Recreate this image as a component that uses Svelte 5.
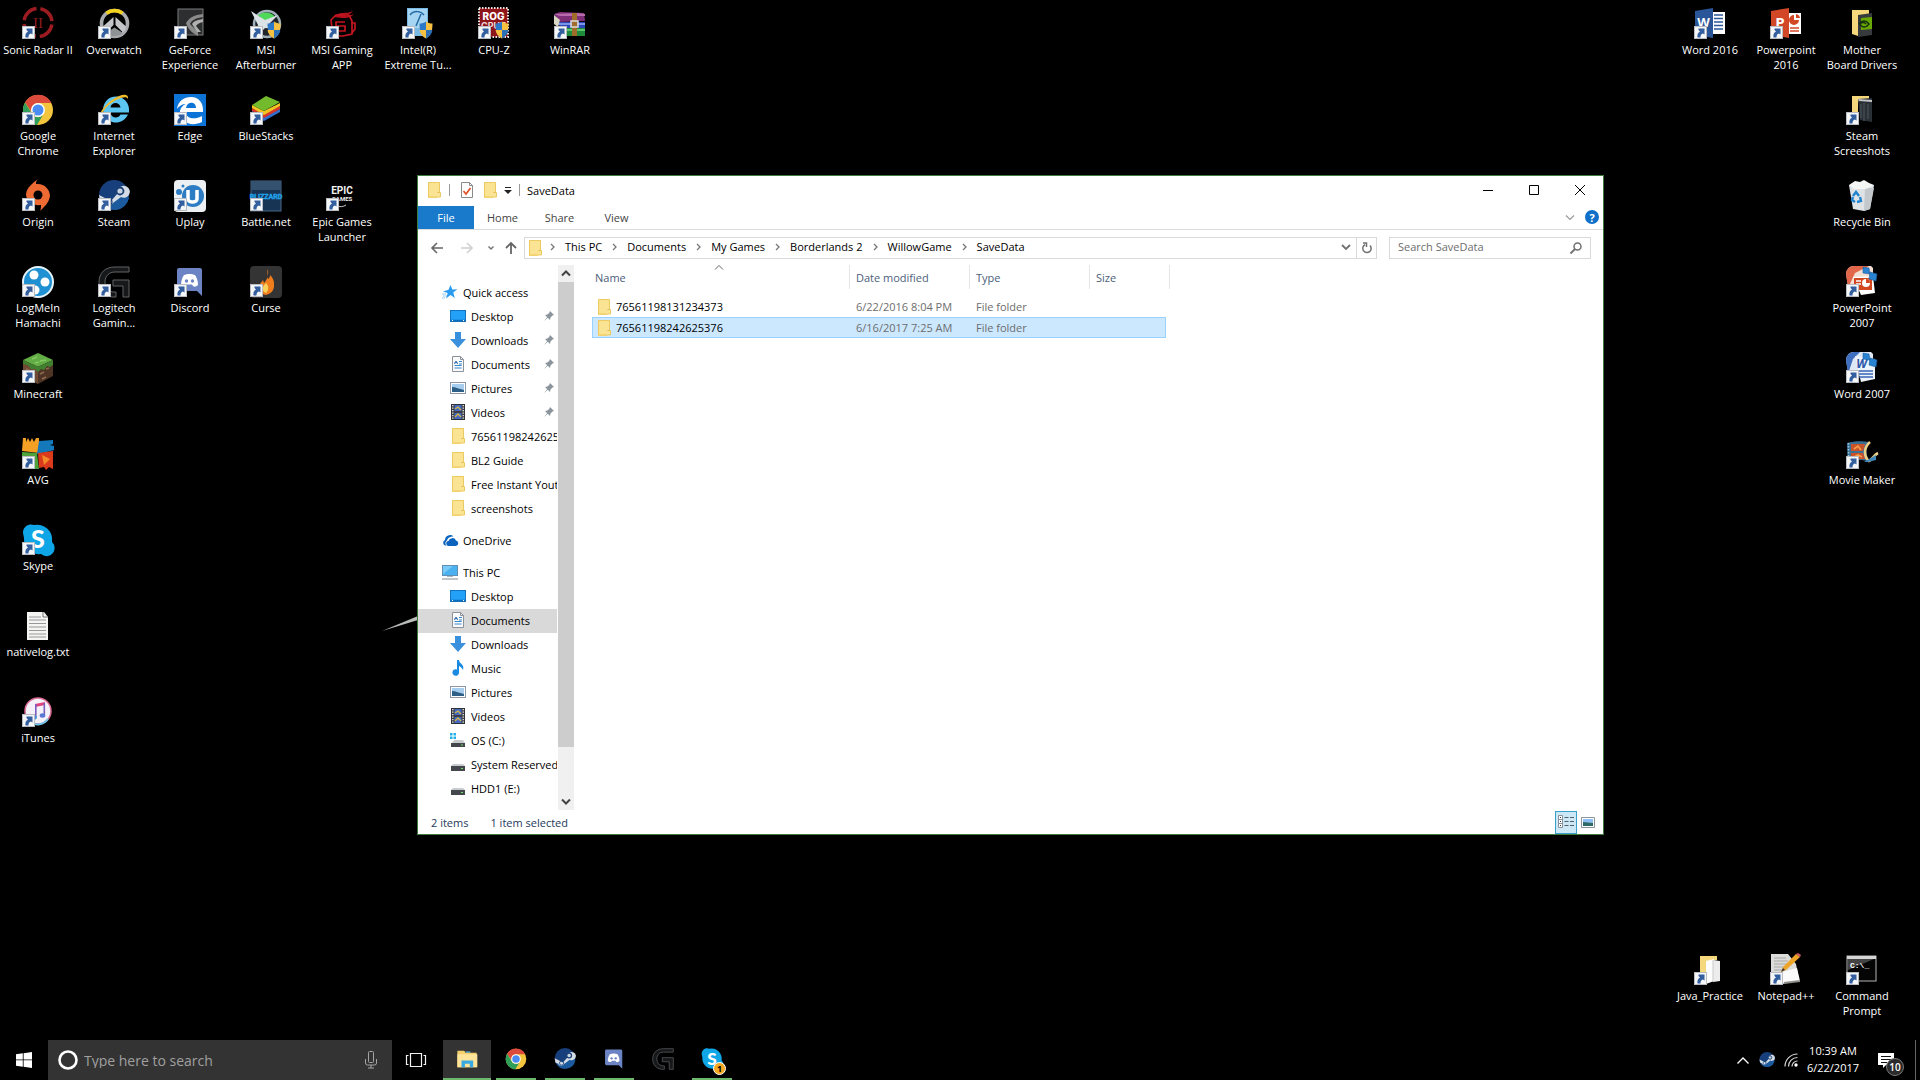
<script>
  const shield =
    '<path d="M24 13.500c2 1.500 4 2 6.500 2 0 7-1.500 12-6.500 15z" fill="#f6c140"/><path d="M24 13.500c-2 1.500-4 2-6.500 2 0 7 1.500 12 6.500 15z" fill="#2d78c8"/><path d="M17.600 22h6.400v8.500c-4-2-6-5-6.400-8.500z" fill="#f6c140"/><path d="M24 22h6.400c-.4 3.500-2.400 6.500-6.400 8.500z" fill="#2d6fb5"/>';
  const folderBack = '<path d="M6 2h17v4l-11 2v20l-6-2z" fill="#f5d77c"/>';
  const compress =
    '<path d="M17 1l6 1 1 6-7-1zM24 6l7 2-1 7-7-2z" fill="#2a83d0" stroke="#1c5d9e" stroke-width=".6"/>';

  const art = {
    sonic:
      '<circle cx="16" cy="14.500" r="14" fill="none" stroke="#9c1c22" stroke-width="3.500" stroke-dasharray="18 4" stroke-dashoffset="-2"/><text x="16" y="20" font-family="Liberation Serif" font-size="15" text-anchor="middle" fill="#8f1a1f">II</text>',
    overwatch:
      '<circle cx="16.500" cy="15.500" r="13" fill="none" stroke="#a9abae" stroke-width="3.600"/><path d="M8.500 5.300a13 13 0 0 1 16 0" fill="none" stroke="#f2d21f" stroke-width="3.800"/><path d="M15.500 9v8L8 24.500c-2-2-3-4-3-6zM17.500 9v8l7.500 7.500c2-2 3-4 3-6z" fill="#c3c5c8"/><path d="M8 25l8.500-5.500L25 25a13 13 0 0 1-17 0z" fill="#8f9295"/>',
    geforce:
      '<rect x="4" y="1" width="25" height="26" fill="#2d2e2f" stroke="#7c7c7c"/><path d="M12 15c4-6 8-8 17-9v3c-7 1-11 3-13 7l8 8v4c-6-3-10-7-12-13z" fill="#8b8b8b"/><path d="M18 16c2-3 5-4 11-5v3c-4 1-6 2-7 4l5 6h-4z" fill="#b0b0b0"/>',
    afterburner:
      '<circle cx="17" cy="16" r="13" fill="#20252a" stroke="#9fb0b8" stroke-width="2.500"/><path d="M8 7c7-4 13-3 17 2l-10 5z" fill="#4fd95a"/><path d="M1 3l14 9 13-5-9 9 7 5-11-1-9 9 2-12z" fill="#dce3e6"/>' + shield,
    msi:
      '<path d="M8 9c6-7 12-2 19-6-2 3-6 4-9 4 4 1 8 0 10-1-3 4-8 4-12 4" fill="#b3121c"/><path d="M5 12l5-5h13l3 6v13l-9 2H7zM19 14h-9v4h9v5h-9M25 15h4v6l-3 4" fill="none" stroke="#c41521" stroke-width="1.700"/>',
    intel:
      '<path d="M5 0h21v22l-5 6H5z" fill="#79b9e5"/><path d="M6 1h19v19H6z" fill="#a5d5f3"/><path d="M8 7c4-5 11-4 14 0M14 18l5-12" fill="none" stroke="#246aa5" stroke-width="1.500"/>' + shield,
    cpuz:
      '<rect x="1" y="0" width="29" height="29" fill="#8e1519"/><rect x="1" y="0" width="29" height="29" fill="none" stroke="#e9e4e4" stroke-width="2" stroke-dasharray="1.500 1.500"/><text x="15.500" y="12" font-family="Inter" font-size="10" font-weight="800" text-anchor="middle" fill="#fff">ROG</text><text x="15.500" y="21" font-family="Inter" font-size="9" font-weight="700" text-anchor="middle" fill="#f0dada">CPUZ</text>' + shield,
    winrar:
      '<path d="M0 6l6-2 24 1 1 8-25 1z" fill="#7f2e78"/><path d="M0 6l24-1 7 1v2H6z" fill="#b86cae"/><path d="M3 14h28v6H7z" fill="#2b49b8"/><path d="M3 15h28v2H5z" fill="#7b94e8"/><path d="M7 20h24v8H8z" fill="#1f8a3b"/><path d="M8 21h23v2H8z" fill="#5fc471"/><path d="M0 7l6 5-2 7-4-3z" fill="#d9d5c3"/><path d="M18 5h5v23h-5z" fill="#a06e2a"/><rect x="17" y="13" width="7" height="6" fill="none" stroke="#ddd" stroke-width="1.500"/>',
    chrome:
      '<circle cx="16" cy="16" r="15" fill="#f2c53d"/><path d="M3 8.500A15 15 0 0 1 29.500 9H16a7 7 0 0 0-6.500 9z" fill="#db4a3b"/><path d="M3 8.500A15 15 0 0 0 15 31l6-10a7 7 0 0 1-11.500-2z" fill="#2f9e59"/><circle cx="16" cy="16" r="7" fill="#fff"/><circle cx="16" cy="16" r="5.500" fill="#4b8bf4"/>',
    ie:
      '<path d="M30 20.500A13 13 0 1 1 31 15v3.500H12.500c.5 6 8 6.500 10 2zM12.500 13.500h10c-.5-6-9.500-6-10 0z" fill="#5dc5f1" fill-rule="evenodd"/><path d="M2 27C-1 20 8 9 17 4c6-4 14-5 13 1-1-3-6-2-12 1C9 11 2 19 2 27z" fill="#f0bc2e"/>',
    edge:
      '<rect width="32" height="32" fill="#0c74d6"/><path d="M3 15C4 7 10 3 17 3c8 0 12 6 12 13v2H12c0 7 9 8 16 4v6c-10 5-22 1-22-10 0-4 3-7 6-8-4 0-7 2-9 5zm9-1h10c0-7-9-7-10 0z" fill="#fff" fill-rule="evenodd"/>',
    bluestacks:
      '<path d="M2 20l12 7 16-9v-3L14 23 2 17z" fill="#2f6fd0"/><path d="M2 17l12 7 16-9v-3L14 20 2 14z" fill="#d9362b"/><path d="M2 14l12 7 16-9v-3L14 17 2 11z" fill="#f2c522"/><path d="M2 11L16 2l14 6-16 9z" fill="#73bb2d"/>',
    origin:
      '<path d="M16-1c-2 2-2 3-2 5 8-1 14 5 14 12-1 7-6 11-10 15 1-2 1-4 1-6C11 26 4 21 4 14 5 7 11 3 16-1z" fill="#ee6a33"/><circle cx="16" cy="15" r="4.500" fill="#000"/>',
    steam:
      '<circle cx="16" cy="15" r="15" fill="#173f7c"/><path d="M3 22A15 15 0 0 0 31 18L26 9l-9 10z" fill="#1b5a9c"/><path d="M1 15l12 6 7-8a6 6 0 1 1 3 4l-8 6a5 5 0 0 1-9 0l-4-2z" fill="#d4dce5"/><circle cx="22" cy="11" r="3.500" fill="#c9d3df" stroke="#1a3f77" stroke-width="1.800"/><circle cx="11" cy="22" r="3" fill="none" stroke="#1a3f77" stroke-width="1.200"/>',
    uplay:
      '<rect width="32" height="32" rx="4" fill="#eef1f3"/><circle cx="19" cy="16" r="11" fill="#2e7cc3"/><path d="M14 10v9c0 4 9 4 9 0v-9" fill="none" stroke="#fff" stroke-width="3.500"/><circle cx="5" cy="12" r="3" fill="#2e7cc3"/><circle cx="9" cy="6" r="1.500" fill="#2e7cc3"/>',
    battlenet:
      '<rect x="1" y="1" width="30" height="30" fill="#183454" stroke="#4b6787"/><path d="M1 1h30v9H1z" fill="#33526f"/><text x="16" y="19" font-family="Liberation Sans Narrow, Roboto" font-size="7" font-weight="700" text-anchor="middle" fill="#20a3ea" stroke="#20a3ea" stroke-width=".4">BLIZZARD</text>',
    epic:
      '<text x="16" y="14" font-family="Roboto" font-size="10" font-weight="700" text-anchor="middle" fill="#f3f3f3">EPIC</text><text x="16" y="21" font-family="Roboto" font-size="6" font-weight="700" text-anchor="middle" fill="#eee">GAMES</text><path d="M10 26c4 1 7 1 10-1" stroke="#ccc" fill="none"/>',
    hamachi:
      '<circle cx="16" cy="16" r="15" fill="#1f91d2" stroke="#e5f4fb" stroke-width="2"/><circle cx="12" cy="9" r="4.500" fill="#fff"/><circle cx="23" cy="16" r="4.500" fill="#fff"/><circle cx="13" cy="24" r="4.500" fill="#fff"/>',
    logitech:
      '<path d="M31 1H17C7 1 1 7 1 16c0 8 5 14 13 15h4v-5h-3c-5-1-8-5-8-10 0-6 4-10 10-10h14zM15 14h16v17h-6V20H15z" fill="#17181a" stroke="#606264" stroke-width="1"/>',
    discord:
      '<path d="M3 4q0-2 2-2h21q2 0 2 2v26l-5-5H5q-2 0-2-2z" fill="#6c84c4"/><path d="M10 9c3-1.500 8-1.500 11 0 2 3 3 6 3 10-2 2-4 2-5 1l-1-1.500h-5L12 20c-2 1-4 0-5-1 0-4 1-7 3-10z" fill="#fff"/><circle cx="12.500" cy="15" r="1.700" fill="#6c84c4"/><circle cx="18.500" cy="15" r="1.700" fill="#6c84c4"/>',
    curse:
      '<rect width="32" height="32" rx="4" fill="#353434"/><path d="M17 3c3 5-1 7 1 10 2-1 2-3 2-4 5 5 4 9 4 12-1 5-4 7-8 8-6-1-8-5-7-9 1-3 3-4 4-6l1 3c4-4 4-8 3-14z" fill="#ef7d1c"/><path d="M16 17c3 3 3 7 0 10-4-2-5-5 0-10z" fill="#fbd35c"/>',
    minecraft:
      '<path d="M1 8L16 1l15 7-15 7z" fill="#62ad46"/><path d="M1 8l15 7v17L1 24z" fill="#6f4b34"/><path d="M31 8l-15 7v17l15-8z" fill="#4e3424"/><path d="M1 8l15 7 15-7v5l-3 2-3-1-3 4-3-1-3 3-3-3-4 0-3-4-5-1z" fill="#3f8130"/><path d="M4 17l3 1M9 22l4 1M18 22l4-2M24 17l3-1M20 27l4-2M10 27l3 1" stroke="#8f6b4f" stroke-width="1.500"/><path d="M10 7l5-2M18 9l6-1M13 11l4-1" stroke="#85c963" stroke-width="1.500"/>',
    avg:
      '<path d="M1 0h3v4l2-4 2 4 2-4 2 4 2-4h3v15L0 13z" fill="#f4a024"/><path d="M17 3l14-1v4l-3 1 4 1v4l-3 1-14 3z" fill="#1379ba"/><path d="M0 14l15 1 2 16H0z" fill="#4ea23b"/><path d="M16 15l15-2v18l-4-2-3 3-2-3-5 1z" fill="#db3a1d"/><path d="M20 17l8 4-6 6z" fill="#f58a28"/>',
    skype:
      '<path d="M1 9A8 8 0 0 1 12 1 15 15 0 0 1 30 18a8 8 0 0 1-11 12A15 15 0 0 1 2 14z" fill="#0fa6e8"/><text x="16" y="24" font-family="Lato" font-size="25" font-weight="900" text-anchor="middle" fill="#fff">S</text>',
    text:
      '<path d="M5 2h17l4 5v23H5z" fill="#f4f4f2"/><path d="M21 2v5h5" fill="none" stroke="#777"/><path d="M7 10h17M7 13.500h17M7 17h17M7 20.500h17M7 24h17M7 27h17M7 7h12" stroke="#98989a" stroke-width="1"/>',
    itunes:
      '<circle cx="16" cy="15" r="13" fill="#f5f1f8" stroke="#d96a92" stroke-width="1.500"/><path d="M8 26a13 13 0 0 0 18-3" fill="none" stroke="#6fc4ea" stroke-width="2"/><path d="M13 8l10-2v3l-10 2z" fill="#e0447c"/><path d="M13.800 8v13M22.300 7v12" stroke="#7b5fc0" stroke-width="1.600"/><ellipse cx="12" cy="21.500" rx="2.800" ry="2.200" fill="#3b8fdc"/><ellipse cx="20.500" cy="19.500" rx="2.800" ry="2.200" fill="#5a77d5"/>',
    word16:
      '<path d="M17 4h14v22H17z" fill="#fff"/><path d="M20 7h9M20 10.500h9M20 14h9M20 17.500h9M20 21h9" stroke="#2a5699" stroke-width="1.500"/><path d="M1 3l18-3v30L1 27z" fill="#2a5699"/><text x="9.500" y="19" font-family="Open Sans" font-size="13" font-weight="700" text-anchor="middle" fill="#fff">W</text>',
    ppt16:
      '<path d="M17 5h14v21H17z" fill="#fff"/><path d="M24 7a5 5 0 1 0 5 5h-5z" fill="#d24726"/><path d="M26 6a5 5 0 0 1 4 4h-4z" fill="#d24726"/><path d="M20 20h9M20 23h9" stroke="#d24726" stroke-width="1.500"/><path d="M1 3l18-3v30L1 27z" fill="#d24726"/><text x="10" y="20" font-family="Open Sans" font-size="15" font-weight="700" text-anchor="middle" fill="#fff">P</text>',
    drivers:
      folderBack + '<path d="M12 7l14-2v22l-14 2z" fill="#363a3c"/><path d="M15 10l11-1v12l-11 1z" fill="#69a800"/><path d="M13 16c3-4 7-4 10 0-3 4-7 4-9 0 2-2 4-2 6 0" fill="none" stroke="#19330a" stroke-width="1.500"/>',
    shots:
      folderBack + '<path d="M12 5l14-1v24l-12-2z" fill="#2b3036"/><path d="M12 5l14 1v2l-13-1z" fill="#c4c7ca"/><path d="M15 10v14M18 9v18M22 10v15" stroke="#434b53" stroke-width="1.500"/>',
    bin:
      '<path d="M3 5h25l-4 24-6 2-11-2z" fill="#dfe3e6"/><path d="M19 8h9l-4 21-6 2z" fill="#c2c8cc"/><path d="M3 5l6-4 5 1 4-2 5 3 5 2-8 4H8z" fill="#f5f6f6"/><path d="M7 16l3-4 3 4M14 17l1 4-4 1M9 22l-3-2 1-3" fill="none" stroke="#1f83cf" stroke-width="2.400"/>',
    ppt07:
      '<path d="M0 8Q1 0 8 0h17l2 2v20L3 25z" fill="#f3ded3"/><path d="M0 8Q1 0 8 0h15L9 7 2 22z" fill="#e2674a"/><path d="M7 11l20-1 2 17-14 2z" fill="#fff"/><path d="M8 12h18v12H8z" fill="#d2471f"/><circle cx="20" cy="17" r="4" fill="#fff"/><path d="M20 17v-4a4 4 0 0 1 4 4z" fill="#d2471f"/><path d="M10 15h5M10 18h5" stroke="#fff" stroke-width="1.500"/>' + compress,
    word07:
      '<path d="M0 8Q1 0 8 0h17l2 2v20L3 25z" fill="#dfe9f5"/><path d="M0 8Q1 0 8 0h6L7 7 2 22z" fill="#416fbf"/><path d="M9 4l20 3v20l-14 3z" fill="#eef4fb"/><text x="15.500" y="16" font-family="Open Sans" font-size="12" font-style="italic" font-weight="700" text-anchor="middle" fill="#2d56a6">W</text><path d="M13 19h14M13 22h14M13 25h14" stroke="#3866b5" stroke-width="1.500"/>' + compress,
    movie:
      '<path d="M1 5c7-2 15-2 22-1-4 7-3 13 1 20-8-3-16-2-23 0 1-7 0-12 0-19z" fill="#3b7095"/><path d="M5 6h14l-2 7H5zM5 15h12l2 6H5z" fill="#c9522a"/><path d="M8 11l4-3 3 4M8 19l4-2 4 2" fill="none" stroke="#f8a04a" stroke-width="1.600"/><path d="M24 4c-7 6-6 15-1 19 3-1 5-6 9-8" fill="none" stroke="#efcf88" stroke-width="2.600"/><path d="M2.500 5v18" stroke="#9ec7df" stroke-width="1.500" stroke-dasharray="1.500 1.500"/><path d="M18 24l12-7v5l-8 2z" fill="#3f86b8"/>',
    java:
      folderBack + '<path d="M12 7l8-2v22l-8 3z" fill="#fdfdfd"/><path d="M19 6l7 1v20l-7 1z" fill="#ececec"/><path d="M19 6v22" stroke="#c9c9c9"/>',
    npp:
      '<path d="M1 0h17l8 10 3 16-16 4L1 24z" fill="#dcdcda"/><path d="M4 4h12M4 7h14M4 10h14M4 13h10M4 16h8" stroke="#a7a7a5"/><path d="M12 18l15-4 3 13-17 2z" fill="#fbfbfb"/><path d="M14 29l16-2" stroke="#8d8d8a" stroke-width="2"/><path d="M11 18l2-5L26 0l4 3-14 13z" fill="#eda528"/><path d="M26 0l2-1 3 2-1 2z" fill="#d45c66"/><path d="M11 18l2-4 2 2z" fill="#333"/>',
    cmd:
      '<rect x="1" y="2" width="29" height="25" fill="#050505" stroke="#b5b5b5"/><path d="M1 2h29v3H1z" fill="#d6d6d6"/><path d="M2 5h26L2 16z" fill="#444"/><text x="4" y="14" font-family="Liberation Mono" font-size="8" font-weight="700" fill="#fff">C:\\_</text>',
    // 16px artwork
    folder: '<path d="M2 0h12v11h1v4h-4v1H2z" fill="#f7da7d"/><path d="M2 0h12v15H2z" fill="#fbe394"/><path d="M2.500.500h11v10h1v4.500h-12z" fill="none" stroke="#ecca62"/><path d="M11.500 10.500h2" stroke="#e0b94d"/>',
    star: '<path d="M8.500 1l1.800 4.500 5-.2-4 3.200 1.500 5.500-4.300-3-4.500 3.500 1.700-5.500L1 7.500l5.500-1.700z" fill="#2b9bf0"/><path d="M0 10h4M1 12h4M0 14h3" stroke="#80c2f2" stroke-width=".8"/>',
    desktop: '<rect x=".5" y="2.500" width="15" height="11" fill="#23a0f8" stroke="#1373bf"/><path d="M1 12.500h14" stroke="#0e6cb8" stroke-width="1.500"/><path d="M2 12.500h1M13 12.500h1" stroke="#fff" stroke-width="1"/>',
    down: '<path d="M5 0h6v7h5l-8 9-8-9h5z" fill="#3a90dd"/>',
    doc: '<path d="M2.500.500h8l3 3v12h-11z" fill="#fafafa" stroke="#8b9299"/><path d="M10.500.500v3h3" fill="none" stroke="#8b9299"/><path d="M4.500 6.500h3M9 5.500h3M9 8h3M4.500 9.500h7M4.500 12h7" stroke="#3487d0" stroke-width="1.200"/><path d="M4.500 8l1.500-3 1.500 3" fill="none" stroke="#3a6fa6"/>',
    pic: '<rect x=".5" y="2.500" width="15" height="11" fill="#fff" stroke="#8c98a6"/><path d="M2 4h12v8H2z" fill="#a7cdee"/><path d="M2 7c4 0 7 2 12 3v2H2z" fill="#2d5f86"/>',
    video: '<rect x="1.500" y=".5" width="13" height="15" fill="#3b3f46" stroke="#2e3138"/><path d="M2.800 1v14M13.200 1v14" stroke="#fff" stroke-width="1.200" stroke-dasharray="1.200 1.300"/><path d="M4.500 1h7v6h-7zM4.500 9h7v6h-7z" fill="#4469c0"/><path d="M5 5l3-2 3 3M5 13l3-3 3 3" fill="none" stroke="#d3b54a" stroke-width="1.300"/>',
    onedrive: '<path d="M4.500 13.500H3a3 3 0 0 1 0-5.500 5 5 0 0 1 8.500-3.500c-4 0-6 2-6.500 4-2 1-2 4-.5 5z" fill="#0a63bd"/><path d="M7 14a2.500 2.500 0 0 1-.5-5 4 4 0 0 1 7.500-.5 2.800 2.800 0 0 1 0 5.500z" fill="#0a63bd"/>',
    pc: '<rect x=".5" y="1.500" width="15" height="10" fill="#4bb1f0" stroke="#5f8fb3"/><path d="M5 12h6v1H5z" fill="#a8b6c1"/><path d="M0 15h16" stroke="#828c94"/><path d="M1 2h10L1 10z" fill="#79caf7"/>',
    music: '<path d="M7 0h2c0 4 6 4 4 10-1-2-2-3-4-4v6.500a3.300 3.300 0 1 1-2-3z" fill="#1a8be0"/>',
    drive: '<path d="M1 10l2-2h10l2 2z" fill="#c9cccf"/><rect x="1" y="10" width="14" height="5" fill="#44484c"/><rect x="11" y="12" width="2" height="1" fill="#6edb6e"/>',
    osdrive: '<path d="M2 11l2-3h9l2 3z" fill="#c9cccf"/><rect x="1" y="11" width="14" height="4" fill="#44484c"/><rect x="11" y="12.500" width="2" height="1" fill="#6edb6e"/><path d="M0 1h2.500v2.500H0zM3.500 1H6v2.500H3.500zM0 4.500h2.500V7H0zM3.500 4.500H6V7H3.500z" fill="#20b0e8"/>',
    explorer: '<path d="M2 4h10l2 3h16v21H2z" fill="#f6d06c"/><path d="M4 9h27v19H2V9z" fill="#fde49a"/><path d="M8 28V18h17v10h-5v-5h-7v5z" fill="#3aa9e0"/><path d="M14 5h7v2h-7z" fill="#5fb0d6"/>'
  };

  const d = (col, row, icon, label, shortcut = true) => ({ col, row, icon, label, shortcut });
  const leftItems = [
    d(1, 1, 'sonic', 'Sonic Radar II'), d(2, 1, 'overwatch', 'Overwatch'),
    d(3, 1, 'geforce', 'GeForce\nExperience'), d(4, 1, 'afterburner', 'MSI\nAfterburner'),
    d(5, 1, 'msi', 'MSI Gaming\nAPP'), d(6, 1, 'intel', 'Intel(R)\nExtreme Tu...'),
    d(7, 1, 'cpuz', 'CPU-Z'), d(8, 1, 'winrar', 'WinRAR'),
    d(1, 2, 'chrome', 'Google\nChrome'), d(2, 2, 'ie', 'Internet\nExplorer'),
    d(3, 2, 'edge', 'Edge'), d(4, 2, 'bluestacks', 'BlueStacks'),
    d(1, 3, 'origin', 'Origin'), d(2, 3, 'steam', 'Steam'), d(3, 3, 'uplay', 'Uplay'),
    d(4, 3, 'battlenet', 'Battle.net'), d(5, 3, 'epic', 'Epic Games\nLauncher'),
    d(1, 4, 'hamachi', 'LogMeIn\nHamachi'), d(2, 4, 'logitech', 'Logitech\nGamin...'),
    d(3, 4, 'discord', 'Discord'), d(4, 4, 'curse', 'Curse'),
    d(1, 5, 'minecraft', 'Minecraft'), d(1, 6, 'avg', 'AVG'), d(1, 7, 'skype', 'Skype'),
    d(1, 8, 'text', 'nativelog.txt', false), d(1, 9, 'itunes', 'iTunes')
  ];
  const rightItems = [
    d(1, 1, 'word16', 'Word 2016'), d(2, 1, 'ppt16', 'Powerpoint\n2016'),
    d(3, 1, 'drivers', 'Mother\nBoard Drivers', false), d(3, 2, 'shots', 'Steam\nScreeshots'),
    d(3, 3, 'bin', 'Recycle Bin', false), d(3, 4, 'ppt07', 'PowerPoint\n2007'),
    d(3, 5, 'word07', 'Word 2007'), d(3, 6, 'movie', 'Movie Maker'),
    d(1, 12, 'java', 'Java_Practice'), d(2, 12, 'npp', 'Notepad++'), d(3, 12, 'cmd', 'Command\nPrompt')
  ];

  const groups = [
    { icon: 'star', name: 'Quick access', items: [
      ['desktop', 'Desktop', 1], ['down', 'Downloads', 1], ['doc', 'Documents', 1], ['pic', 'Pictures', 1],
      ['video', 'Videos', 1], ['folder', '76561198242625376'], ['folder', 'BL2 Guide'],
      ['folder', 'Free Instant Youtube'], ['folder', 'screenshots']
    ] },
    { icon: 'onedrive', name: 'OneDrive', items: [] },
    { icon: 'pc', name: 'This PC', items: [
      ['desktop', 'Desktop'], ['doc', 'Documents', 0, 1], ['down', 'Downloads'], ['music', 'Music'],
      ['pic', 'Pictures'], ['video', 'Videos'], ['osdrive', 'OS (C:)'],
      ['drive', 'System Reserved'], ['drive', 'HDD1 (E:)']
    ] }
  ];

  const path = ['This PC', 'Documents', 'My Games', 'Borderlands 2', 'WillowGame', 'SaveData'];
  const files = [
    { name: '76561198131234373', date: '6/22/2016 8:04 PM' },
    { name: '76561198242625376', date: '6/16/2017 7:25 AM', selected: true }
  ];
  const apps = [
    { icon: 'explorer', name: 'File Explorer', state: 'active' },
    { icon: 'chrome', name: 'Google Chrome', state: 'open' },
    { icon: 'steam', name: 'Steam', state: 'open' },
    { icon: 'discord', name: 'Discord', state: 'open' },
    { icon: 'logitech', name: 'Logitech Gaming Software', state: '' },
    { icon: 'skype', name: 'Skype', state: 'open', badge: '1' }
  ];
</script>

{#snippet big(name)}
  <svg class="big" viewBox="0 0 32 32" aria-hidden="true">{@html art[name]}</svg>
{/snippet}

{#snippet small(name)}
  <svg class="small" viewBox="0 0 16 16" aria-hidden="true">{@html art[name]}</svg>
{/snippet}

{#snippet shortcuts(items)}
  {#each items as it}
    <button class="item" style:grid-column={it.col} style:grid-row={it.row}>
      <span class="pic">
        {@render big(it.icon)}
        {#if it.shortcut}
          <svg class="arrow" viewBox="0 0 13 13" aria-hidden="true">
            <rect x=".5" y=".5" width="12" height="12" fill="#f5f6f8" stroke="#b9bcc0" />
            <path d="M3.500 11.500C3 8.500 4 6.500 6 5.500L4.500 4V2.500h6V8.500L9 7.500C7 8 6.500 9.500 6.500 11.500z" fill="#345f9f" />
          </svg>
        {/if}
      </span>
      <span class="label">{it.label}</span>
    </button>
  {/each}
{/snippet}

<div class="screen">
  <main class="desktop">
    <div class="icons">{@render shortcuts(leftItems)}</div>
    <div class="icons">{@render shortcuts(rightItems)}</div>

    <svg class="streak" viewBox="0 0 36 16" aria-hidden="true">
      <path d="M0 15L36 0v4z" fill="#b9bdb9" />
    </svg>

    <section class="window" aria-label="SaveData">
      <header class="titlebar">
        {@render small('folder')}
        <i class="sep"></i>
        <button class="quick" aria-label="Properties">
          <svg class="small" viewBox="0 0 16 16">
            <path d="M2.500.500h8l3 3v12h-11z" fill="#fff" stroke="#8a8a8a" />
            <path d="M10.500.500v3h3" fill="none" stroke="#8a8a8a" />
            <path d="M4.500 9l2.500 3 4.500-6" fill="none" stroke="#e2562c" stroke-width="1.800" />
          </svg>
        </button>
        <button class="quick second" aria-label="New folder">{@render small('folder')}</button>
        <button class="quick" aria-label="Customize Quick Access Toolbar">
          <svg class="caret" viewBox="0 0 8 8"><path d="M1 1.500h6" stroke="#222" /><path d="M0 4h8L4 8z" fill="#222" /></svg>
        </button>
        <i class="sep"></i>
        <h1>SaveData</h1>
        <div class="controls">
          <button aria-label="Minimize"><svg viewBox="0 0 10 10"><path d="M0 5.500h10" /></svg></button>
          <button aria-label="Maximize"><svg viewBox="0 0 10 10"><path d="M.5.500h9v9h-9z" /></svg></button>
          <button aria-label="Close"><svg viewBox="0 0 10 10"><path d="M0 0l10 10M10 0L0 10" /></svg></button>
        </div>
      </header>

      <nav class="tabs" aria-label="Ribbon">
        <button class="file">File</button>
        <button>Home</button>
        <button>Share</button>
        <button>View</button>
        <span class="push"></span>
        <button class="mini" aria-label="Expand the Ribbon">
          <svg width="8" height="5" viewBox="0 0 8 5"><path d="M0 .5l4 4 4-4" fill="none" stroke="#999" stroke-width="1.200" /></svg>
        </button>
        <button class="help" aria-label="Help">?</button>
      </nav>

      <div class="address">
        <div class="history">
          <button aria-label="Back"><svg viewBox="0 0 12 12"><path d="M12 6H1M6 1L1 6l5 5" stroke="#666" stroke-width="1.600" /></svg></button>
          <button aria-label="Forward"><svg viewBox="0 0 12 12"><path d="M0 6h11M6 1l5 5-5 5" stroke="#d0d0d0" stroke-width="1.600" /></svg></button>
          <button class="recent" aria-label="Recent locations"><svg viewBox="0 0 12 12"><path d="M3.500 4.500L6 7l2.500-2.500" stroke="#777" stroke-width="1.500" /></svg></button>
          <button class="up" aria-label="Up"><svg viewBox="0 0 12 12"><path d="M6 12V1M1 6l5-5 5 5" stroke="#666" stroke-width="1.800" /></svg></button>
        </div>
        <div class="path">
          {@render small('folder')}
          <div class="crumbs">
            {#each path as part}
              <svg class="chev" viewBox="0 0 5 8" aria-hidden="true"><path d="M1 1l3 3-3 3" fill="none" stroke="#777" stroke-width="1.300" /></svg>
              <button>{part}</button>
            {/each}
          </div>
          <button class="tool" aria-label="Previous locations">
            <svg width="10" height="7" viewBox="0 0 10 7"><path d="M1 1l4 4 4-4" fill="none" stroke="#707070" stroke-width="1.800" /></svg>
          </button>
          <button class="tool refresh" aria-label="Refresh">
            <svg width="12" height="12" viewBox="0 0 12 12"><path d="M9 3.500a4.200 4.200 0 1 1-5-.8M2 1h3.500v4" fill="none" stroke="#707070" stroke-width="1.500" /></svg>
          </button>
        </div>
        <div class="find">
          <input type="text" placeholder="Search SaveData" aria-label="Search SaveData" />
          <svg width="12" height="12" viewBox="0 0 12 12" aria-hidden="true"><circle cx="7.500" cy="4.500" r="3.500" fill="none" stroke="#707070" stroke-width="1.500" /><path d="M5 7l-4.500 4.500" stroke="#707070" stroke-width="1.800" /></svg>
        </div>
      </div>

      <div class="content">
        <nav class="tree" aria-label="Navigation pane">
          {#each groups as g}
            <div class="group">
              <button class="node top">{@render small(g.icon)}<span>{g.name}</span></button>
              {#each g.items as [icon, name, pinned, selected]}
                <button class="node" class:selected>
                  {@render small(icon)}<span>{name}</span>
                  {#if pinned}
                    <svg class="pin" viewBox="0 0 10 10" aria-hidden="true"><path d="M6 0l4 4-1.500.5L6.500 6.500 6 9 3.800 6.800 0 10l3.200-3.800L1 4l2.500-.5 2-2z" fill="#8a949c" /></svg>
                  {/if}
                </button>
              {/each}
            </div>
          {/each}
        </nav>
        <div class="scroll">
          <button aria-label="Scroll up"><svg viewBox="0 0 8 5"><path d="M0 4.500l4-4 4 4" /></svg></button>
          <div class="track"><div class="thumb"></div></div>
          <button aria-label="Scroll down"><svg viewBox="0 0 8 5"><path d="M0 .5l4 4 4-4" /></svg></button>
        </div>
        <div class="list">
          <table>
            <thead>
              <tr>
                <th class="name">
                  Name
                  <svg class="sort" viewBox="0 0 8 5" aria-hidden="true"><path d="M0 4.500l4-4 4 4" fill="none" stroke="#666" /></svg>
                </th>
                <th class="wide">Date modified</th>
                <th class="wide">Type</th>
                <th class="size">Size</th>
                <td class="edge"></td>
              </tr>
            </thead>
            <tbody>
              {#each files as f}
                <tr class:picked={f.selected}>
                  <td class="fname"><span>{@render small('folder')}{f.name}</span></td>
                  <td>{f.date}</td>
                  <td>File folder</td>
                  <td></td>
                </tr>
              {/each}
            </tbody>
          </table>
        </div>
      </div>

      <footer class="status">
        <span>2 items</span>
        <span>1 item selected</span>
        <span class="push"></span>
        <button class="view on" aria-label="Details view">
          <svg width="16" height="14" viewBox="0 0 16 14"><path d="M.5.500h4v12h-4zM.5 4.500h4M.5 8.500h4" fill="#fff" stroke="#8b9299" /><path d="M6.500 2.500h4M12 2.500h4M6.500 6.500h4M12 6.500h4M6.500 10.500h4M12 10.500h4" stroke="#54606a" /><path d="M2 2.500h1M2 6.500h1M2 10.500h1" stroke="#333" /></svg>
        </button>
        <button class="view" aria-label="Large thumbnails">
          <svg width="14" height="11" viewBox="0 0 14 11"><path d="M.5.500h13v10H.5z" fill="#fff" stroke="#8b9299" /><path d="M2 2h10v7H2z" fill="#8fc0f5" /><path d="M2 5c4 0 6 1 10 1v3H2z" fill="#2f6a66" /></svg>
        </button>
      </footer>
    </section>
  </main>

  <footer class="taskbar">
    <button class="start" aria-label="Start">
      <svg width="16" height="16" viewBox="0 0 16 16"><path d="M0 2.300L6.800 1.300v6.200H0zM7.600 1.200L16 0v7.500H7.600zM0 8.300h6.800v6.400L0 13.700zM7.600 8.300H16V16l-8.400-1.200z" fill="#fff" /></svg>
    </button>
    <div class="cortana">
      <svg width="20" height="20" viewBox="0 0 20 20" aria-hidden="true"><circle cx="10" cy="10" r="8.500" fill="none" stroke="#fff" stroke-width="2.600" /></svg>
      <input type="text" placeholder="Type here to search" aria-label="Type here to search" />
      <button aria-label="Speak">
        <svg width="12" height="18" viewBox="0 0 12 18"><rect x="3.500" y=".5" width="5" height="11" rx="1" fill="none" stroke="#a5a5a5" /><path d="M.5 8v4q0 2 2 2h7q2 0 2-2V8M6 14v3M3 17h6" fill="none" stroke="#a5a5a5" /></svg>
      </button>
    </div>
    <button class="start" aria-label="Task view">
      <svg width="20" height="16" viewBox="0 0 20 16"><path d="M4.500 1.500h11v13h-11zM2.500 3.500h-2v9h2M17.500 3.500h2v9h-2" fill="none" stroke="#f2f2f2" stroke-width="1.200" /></svg>
    </button>
    <div class="apps">
      {#each apps as a}
        <button class="app {a.state}" aria-label={a.name}>
          {@render big(a.icon)}
          {#if a.badge}<span class="badge">{a.badge}</span>{/if}
        </button>
      {/each}
    </div>
    <span class="push"></span>
    <div class="tray">
      <button aria-label="Show hidden icons"><svg width="12" height="7" viewBox="0 0 12 7"><path d="M.5 6.500l5.500-5.500 5.500 5.500" fill="none" stroke="#fff" stroke-width="1.300" /></svg></button>
      <button class="mid" aria-label="Steam">{@render big('steam')}</button>
      <button aria-label="Network"><svg width="14" height="14" viewBox="0 0 14 14"><path d="M1 13.500A12.500 12.500 0 0 1 13.500 1M4.500 13.500a9 9 0 0 1 9-9M8 13.500A5.500 5.500 0 0 1 13.500 8" fill="none" stroke="#d8d8d8" stroke-width="1.200" /><circle cx="12" cy="12" r="1.700" fill="#fff" /></svg></button>
      <button class="clock"><span>10:39 AM</span><span>6/22/2017</span></button>
      <button class="notes" aria-label="Notifications">
        <svg width="16" height="15" viewBox="0 0 16 15"><path d="M0 0h16v12H8l-3 3v-3H0z" fill="#fff" /><path d="M3 3.500h10M3 6.500h10M3 9.500h6" stroke="#111" /></svg>
        <span class="count">10</span>
      </button>
      <button class="peek" aria-label="Show desktop"></button>
    </div>
  </footer>
</div>

<style>
  :global(body) { background: #000; }
  .screen {
    min-height: 100vh;
    display: flex;
    flex-direction: column;
    background: #000;
    font: 11px/15px "Open Sans", "Noto Sans", sans-serif;
    color: #000;
    overflow: hidden;
  }
  button {
    font: inherit;
    color: inherit;
    background: none;
    border: 0;
    padding: 0;
    margin: 0;
    display: flex;
    align-items: center;
    justify-content: center;
  }
  input {
    font: inherit;
    color: inherit;
    background: none;
    border: 0;
    padding: 0;
    min-width: 0;
    flex: 1;
    outline: 0;
  }
  svg { flex: none; display: block; overflow: visible; }
  .push { flex: 1; }
  .big { width: 32px; height: 32px; }
  .small { width: 16px; height: 16px; }

  .desktop {
    flex: 1;
    position: relative;
    display: flex;
    justify-content: space-between;
    padding-right: 20px;
  }
  .icons { display: grid; grid-auto-columns: 76px; grid-template-rows: repeat(12, 86px); }
  .item {
    flex-direction: column;
    justify-content: flex-start;
    gap: 2px;
    padding-top: 8px;
    color: #fff;
  }
  .pic { position: relative; }
  .arrow { position: absolute; left: 0; bottom: 1px; width: 13px; height: 13px; }
  .label { white-space: pre; text-align: center; text-shadow: 0 1px 2px #000; }
  .streak { position: absolute; left: 382px; top: 616px; width: 36px; height: 16px; }

  .window {
    position: absolute;
    inset: 175px 316px 205px 417px;
    display: flex;
    flex-direction: column;
    background: #fff;
    border: 1px solid #3f7a3f;
  }
  .titlebar {
    display: flex;
    align-items: center;
    height: 30px;
    padding: 0 0 2px 8px;
    box-sizing: border-box;
  }
  .sep { width: 1px; height: 12px; background: #9a9a9a; margin: 0 7px; }
  .titlebar .quick { margin-left: 2px; }
  .titlebar .second { margin: 0 4px 0 7px; }
  .caret { width: 8px; height: 8px; }
  h1 { font: inherit; margin: 0; flex: 1; }
  .controls { display: flex; align-self: stretch; }
  .controls button { width: 46px; }
  .controls svg { width: 10px; height: 10px; }
  .controls path { fill: none; stroke: #000; }

  .tabs { display: flex; height: 23px; border-bottom: 1px solid #dadbdc; color: #444; }
  .tabs button { width: 57px; }
  .tabs .file { width: 56px; background: #1979ca; color: #fff; }
  .tabs .mini { width: 30px; }
  .tabs .help {
    width: 14px;
    height: 14px;
    margin: 4px 4px 0 0;
    border-radius: 50%;
    background: #0f6fc9;
    color: #fff;
    font-weight: 700;
  }

  .address { display: flex; align-items: center; height: 35px; padding-right: 12px; }
  .history { display: flex; width: 102px; padding-left: 4px; }
  .history button { width: 30px; }
  .history .recent { width: 17px; }
  .history .up { width: 24px; }
  .history svg { width: 12px; height: 12px; }
  .history path { fill: none; }
  .path, .find { display: flex; align-items: center; height: 20px; border: 1px solid #d9d9d9; }
  .path { flex: 1; padding-left: 2px; }
  .crumbs { flex: 1; display: flex; align-items: center; padding-bottom: 2px; margin-left: -3px; }
  .chev { width: 5px; height: 8px; margin: 0 10px; }
  .path .tool { width: 20px; align-self: stretch; }
  .path .refresh { border-left: 1px solid #d9d9d9; }
  .find { width: 184px; padding: 0 8px; margin-left: 12px; color: #666; }
  .find input { padding-bottom: 2px; }
  .find input::placeholder { color: #6d6d6d; opacity: 1; }

  .content { flex: 1; display: flex; min-height: 0; }
  .tree { width: 139px; padding-top: 16px; overflow: hidden; }
  .group + .group { margin-top: 8px; }
  .node {
    width: 100%;
    height: 24px;
    padding: 0 0 2px 32px;
    gap: 5px;
    justify-content: flex-start;
    text-align: left;
    white-space: nowrap;
  }
  .node.top { padding-left: 24px; }
  .node span { flex: 1; min-width: 0; overflow: hidden; }
  .node.selected { background: #d9d9d9; }
  .pin { width: 10px; height: 10px; margin-right: 3px; }
  .scroll { width: 16px; display: flex; flex-direction: column; margin-left: 1px; background: #f0f0f0; }
  .scroll button { height: 17px; }
  .scroll svg { width: 8px; height: 5px; }
  .scroll path { fill: none; stroke: #444; stroke-width: 2; }
  .track { flex: 1; }
  .thumb { height: 91%; background: #cdcdcd; }
  .list { flex: 1; padding-left: 18px; min-width: 0; }
  table { border-collapse: separate; border-spacing: 0; table-layout: fixed; width: 578px; }
  th {
    position: relative;
    height: 24px;
    font-weight: 400;
    text-align: left;
    color: #4c607a;
    padding: 0 0 7px 7px;
  }
  th.name { width: 250px; padding-left: 3px; padding-right: 4px; }
  th.wide { width: 113px; }
  th.size { width: 70px; }
  .edge { width: 4px; padding: 0; }
  th:not(.name), .edge {
    background: linear-gradient(#e5e5e5, #e5e5e5) left top / 1px 24px no-repeat;
  }
  .edge { background-position: right top; }
  .sort { position: absolute; left: calc(50% - 6px); top: 0; width: 8px; height: 5px; }
  tbody td { height: 19px; padding: 0 0 0 7px; color: #6d6d6d; border: 1px solid transparent; border-width: 1px 0; }
  tbody .fname { padding-left: 4px; color: #000; }
  .fname span { display: flex; align-items: center; gap: 4px; }
  .picked td { background: #cce8ff; border-color: #99d1ff; }
  .picked td:first-child { border-left: 1px solid #99d1ff; padding-left: 3px; }
  .picked td:last-child { border-right: 1px solid #99d1ff; }

  .status { display: flex; align-items: center; height: 24px; padding: 0 4px 0 13px; gap: 22px; color: #1e395b; }
  .view { width: 22px; height: 23px; border: 1px solid transparent; box-sizing: border-box; }
  .view.on { background: #cce8f6; border-color: #3a9fc8; }
  .view + .view { margin-left: -22px; }

  .taskbar { display: flex; align-items: stretch; height: 40px; color: #fff; }
  .start { width: 48px; }
  .cortana { display: flex; align-items: center; width: 326px; padding: 0 8px 0 10px; background: #333; }
  .cortana input { font-size: 14px; margin-left: 6px; }
  .cortana input::placeholder { color: #a0a0a0; opacity: 1; }
  .cortana button { width: 26px; }
  .apps { display: flex; gap: 9px; margin-left: 3px; }
  .app { position: relative; width: 40px; box-sizing: border-box; border-bottom: 2px solid transparent; }
  .app .big { width: 22px; height: 22px; }
  .app.open { border-color: #6cb86c; }
  .app.active { width: 48px; background: #333; border-color: #6cb86c; margin-right: -4px; }
  .badge {
    position: absolute;
    right: 6px;
    bottom: 3px;
    width: 11px;
    height: 11px;
    border: 1px solid #fff;
    border-radius: 50%;
    background: #f7a823;
    color: #000;
    font: 700 9px/11px "Open Sans", sans-serif;
  }
  .tray { display: flex; }
  .tray button { width: 24px; }
  .tray .mid svg { width: 16px; height: 16px; }
  .tray .clock { flex-direction: column; width: 60px; line-height: 17px; padding-bottom: 2px; }
  .tray .notes { position: relative; width: 46px; margin-right: 6px; }
  .count {
    position: absolute;
    right: 5px;
    bottom: 4px;
    width: 16px;
    height: 16px;
    border: 1px solid #777;
    border-radius: 50%;
    background: #2b2b2b;
    font: 600 10px/16px "Open Sans", sans-serif;
  }
  .tray .peek { width: 5px; border-left: 1px solid #666; }
</style>
